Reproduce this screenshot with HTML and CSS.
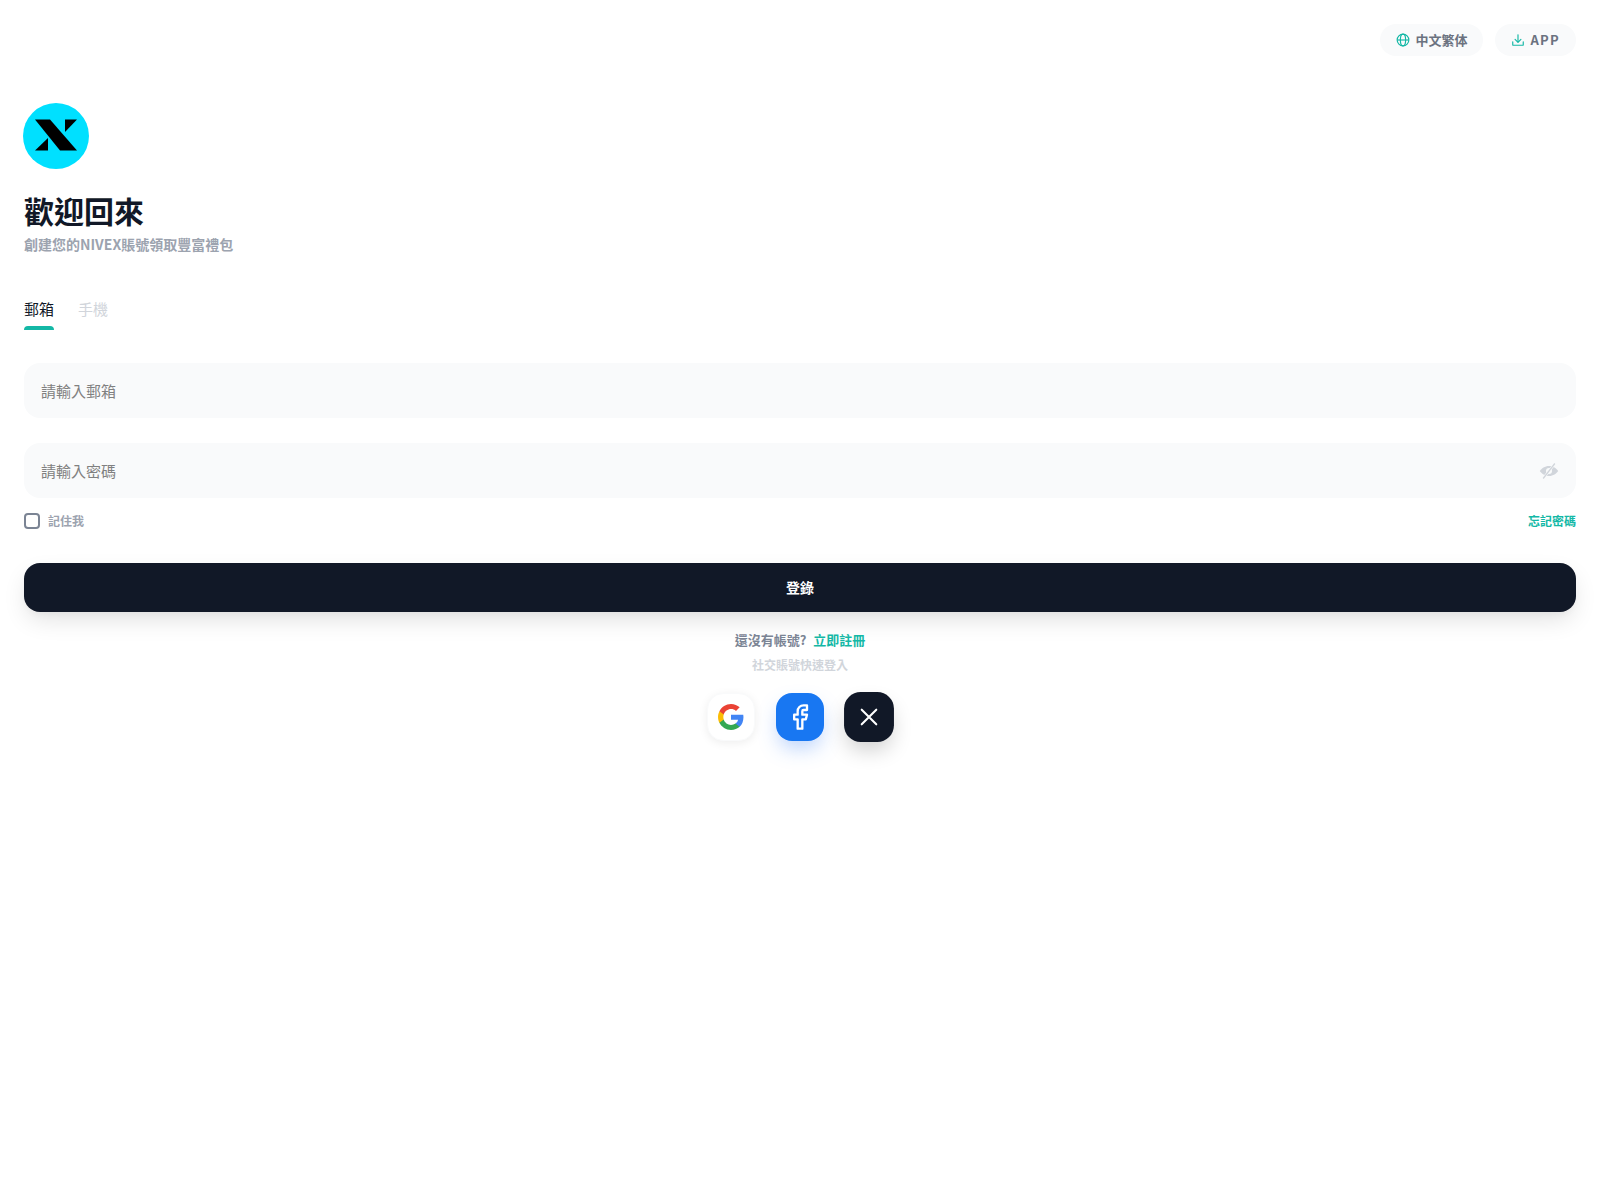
FILE: index.html
```html
<!DOCTYPE html>
<html lang="zh-Hant">
<head>
  <meta charset="UTF-8">
  <meta name="viewport" content="width=device-width, initial-scale=1.0">
  <title>NIVEX</title>
  <link rel="stylesheet" href="styles.css">
</head>
<body>
  <header class="top-bar">
    <button class="pill">
      <svg class="pill-icon" viewBox="0 0 24 24" fill="none" stroke="#14b8a6" stroke-width="2"><circle cx="12" cy="12" r="10"/><ellipse cx="12" cy="12" rx="4.5" ry="10"/><path d="M2 12h20"/></svg>
      中文繁体
    </button>
    <button class="pill pill-app">
      <svg class="pill-icon" viewBox="0 0 24 24" fill="none" stroke="#14b8a6" stroke-width="2" stroke-linecap="round" stroke-linejoin="round"><path d="M3 15v5a1 1 0 0 0 1 1h16a1 1 0 0 0 1-1v-5"/><path d="M12 3v12"/><path d="M7 11l5 5 5-5"/></svg>
      APP
    </button>
  </header>

  <main class="login">
    <div class="logo">
      <svg viewBox="0 0 66 66" width="66" height="66">
        <circle cx="33" cy="33" r="33" fill="#00e0ff"/>
        <path fill="#000" d="M12 16.500h15L54 47.500H37z"/>
        <path fill="#000" d="M42 16.500h12L42 29z"/>
        <path fill="#000" d="M25 35v12.500H12z"/>
      </svg>
    </div>
    <h1 class="title">歡迎回來</h1>
    <p class="subtitle">創建您的NIVEX賬號領取豐富禮包</p>

    <div class="tabs">
      <div class="tab active">郵箱</div>
      <div class="tab">手機</div>
    </div>

    <div class="field">
      <input type="text" placeholder="請輸入郵箱">
    </div>
    <div class="field field-password">
      <input type="password" placeholder="請輸入密碼">
      <svg class="eye" viewBox="0 0 24 24">
        <path fill="#d1d5db" d="M12 6c5 0 9 3 11 6-2 3-6 6-11 6S3 15 1 12c2-3 6-6 11-6z"/>
        <circle cx="12" cy="12" r="3.600" fill="#f9fafb"/>
        <path d="M5 21L19 3" stroke="#f9fafb" stroke-width="3"/>
        <path d="M5 21L19 3" stroke="#d1d5db" stroke-width="1.500"/>
      </svg>
    </div>

    <div class="options">
      <label class="remember"><span class="check"></span>記住我</label>
      <a class="link">忘記密碼</a>
    </div>

    <button class="submit">登錄</button>

    <p class="signup">還沒有帳號? <a class="link-big">立即註冊</a></p>
    <p class="social-label">社交賬號快速登入</p>

    <div class="social">
      <div class="social-btn google">
        <svg viewBox="0 0 24 24" width="26" height="26">
          <path fill="#4285f4" d="M23.500 12.300c0-.8-.1-1.600-.2-2.300H12v4.500h6.500c-.3 1.500-1.100 2.700-2.400 3.600v3h3.900c2.200-2.100 3.500-5.100 3.500-8.800z"/>
          <path fill="#34a853" d="M12 24c3.200 0 6-1.100 8-2.900l-3.900-3c-1.100.7-2.500 1.200-4.100 1.200-3.100 0-5.800-2.100-6.700-5H1.300v3.100C3.300 21.300 7.300 24 12 24z"/>
          <path fill="#fbbc05" d="M5.300 14.300c-.5-1.500-.5-3.100 0-4.600V6.600h-4c-1.700 3.300-1.700 7.500 0 10.800z"/>
          <path fill="#ea4335" d="M12 4.700c1.800 0 3.300.6 4.600 1.800l3.400-3.400C17.900 1.200 15.200 0 12 0 7.300 0 3.300 2.700 1.300 6.600l4 3.100c1-2.900 3.600-5 6.700-5z"/>
        </svg>
      </div>
      <div class="social-btn facebook">
        <svg viewBox="0 0 24 24" width="28" height="28" fill="none" stroke="#fff" stroke-width="2" stroke-linejoin="round"><path d="M18 2h-3a5 5 0 0 0-5 5v3H7v4h3v8h4v-8h3l1-4h-4V7a1 1 0 0 1 1-1h3z"/></svg>
      </div>
      <div class="social-btn twitter">
        <svg viewBox="0 0 24 24" width="24" height="24" fill="none" stroke="#fff" stroke-width="2" stroke-linecap="round"><path d="M5 5l14 14M19 5L5 19"/></svg>
      </div>
    </div>
  </main>
</body>
</html>
```

FILE: styles.css
```css
* {
  box-sizing: border-box;
}
body {
  margin: 0;
  min-height: 100vh;
  background: #fff;
  color: #111827;
  font-family: "Noto Sans CJK TC", "Noto Sans", sans-serif;
}
.top-bar {
  display: flex;
  justify-content: flex-end;
  gap: 12px;
  padding: 24px 24px 0;
}
.pill {
  display: flex;
  align-items: center;
  gap: 5px;
  height: 32px;
  padding: 0 16px 2px;
  border: none;
  border-radius: 16px;
  background: #f9fafb;
  color: #6b7280;
  font-family: inherit;
  font-size: 13px;
  font-weight: 700;
}
.pill-app {
  letter-spacing: 1.3px;
}
.pill-icon {
  width: 14px;
  height: 14px;
  margin-top: 2px;
}
.login {
  padding: 47px 24px 0;
}
.logo {
  display: flex;
  height: 66px;
  margin-left: -1px;
}
.title {
  margin: 21px 0 0;
  font-size: 30px;
  line-height: 40px;
  font-weight: 700;
}
.subtitle {
  margin: 4px 0 0;
  color: #9ca3af;
  font-size: 14px;
  line-height: 20px;
  font-weight: 700;
}
.tabs {
  display: flex;
  gap: 24px;
  margin-top: 42px;
}
.tab {
  color: #d1d5db;
  font-size: 15px;
  line-height: 26px;
  height: 34px;
  position: relative;
}
.tab.active {
  color: #111827;
}
.tab.active::after {
  content: "";
  position: absolute;
  left: 0;
  right: 0;
  bottom: 0;
  height: 4px;
  border-radius: 4px 4px 0 0;
  background: #14b8a6;
}
.field {
  position: relative;
  margin-top: 33px;
}
.field-password {
  margin-top: 25px;
}
.field input {
  display: block;
  width: 100%;
  height: 55px;
  padding: 0 48px 0 17px;
  border: none;
  border-radius: 16px;
  background: #f9fafb;
  font-family: inherit;
  font-size: 15px;
  outline: none;
}
.field input::placeholder {
  color: #808080;
}
.eye {
  position: absolute;
  right: 17px;
  top: 18px;
  width: 20px;
  height: 20px;
}
.options {
  display: flex;
  justify-content: space-between;
  align-items: center;
  margin-top: 13px;
  height: 20px;
  padding-bottom: 2px;
  font-size: 12px;
  font-weight: 700;
}
.remember {
  display: flex;
  align-items: center;
  gap: 8px;
  color: #9ca3af;
}
.check {
  width: 16px;
  height: 16px;
  margin-top: 2px;
  border: 2px solid #7b8494;
  border-radius: 4px;
}
.link {
  color: #14b8a6;
}
.submit {
  display: block;
  width: 100%;
  height: 49px;
  margin-top: 32px;
  padding: 0 0 2px;
  border: none;
  border-radius: 16px;
  background: #111827;
  color: #fff;
  font-family: inherit;
  font-size: 14px;
  font-weight: 700;
  box-shadow: 0 10px 25px -3px rgba(0,0,0,0.12), 0 4px 10px -4px rgba(0,0,0,0.06);
}
.signup {
  margin: 18px 0 0;
  text-align: center;
  color: #7b8494;
  font-size: 13px;
  line-height: 20px;
  font-weight: 700;
}
.link-big {
  margin-left: 4px;
  color: #14b8a6;
}
.social-label {
  margin: 6px 0 0;
  text-align: center;
  color: #d1d5db;
  font-size: 12px;
  line-height: 18px;
  font-weight: 700;
}
.social {
  display: flex;
  justify-content: center;
  gap: 21px;
  margin-top: 19px;
}
.social-btn {
  display: flex;
  align-items: center;
  justify-content: center;
  width: 48px;
  height: 48px;
  border-radius: 16px;
}
.google {
  background: #fff;
  border: 1px solid #f9fafb;
  box-shadow: 0 2px 10px rgba(0,0,0,0.07);
}
.facebook {
  background: #1877f2;
  box-shadow: 0 10px 20px -3px rgba(59,130,246,0.35);
}
.twitter {
  background: #111827;
  box-shadow: 0 10px 20px -3px rgba(0,0,0,0.2);
  transform: scale(1.04);
}
```
